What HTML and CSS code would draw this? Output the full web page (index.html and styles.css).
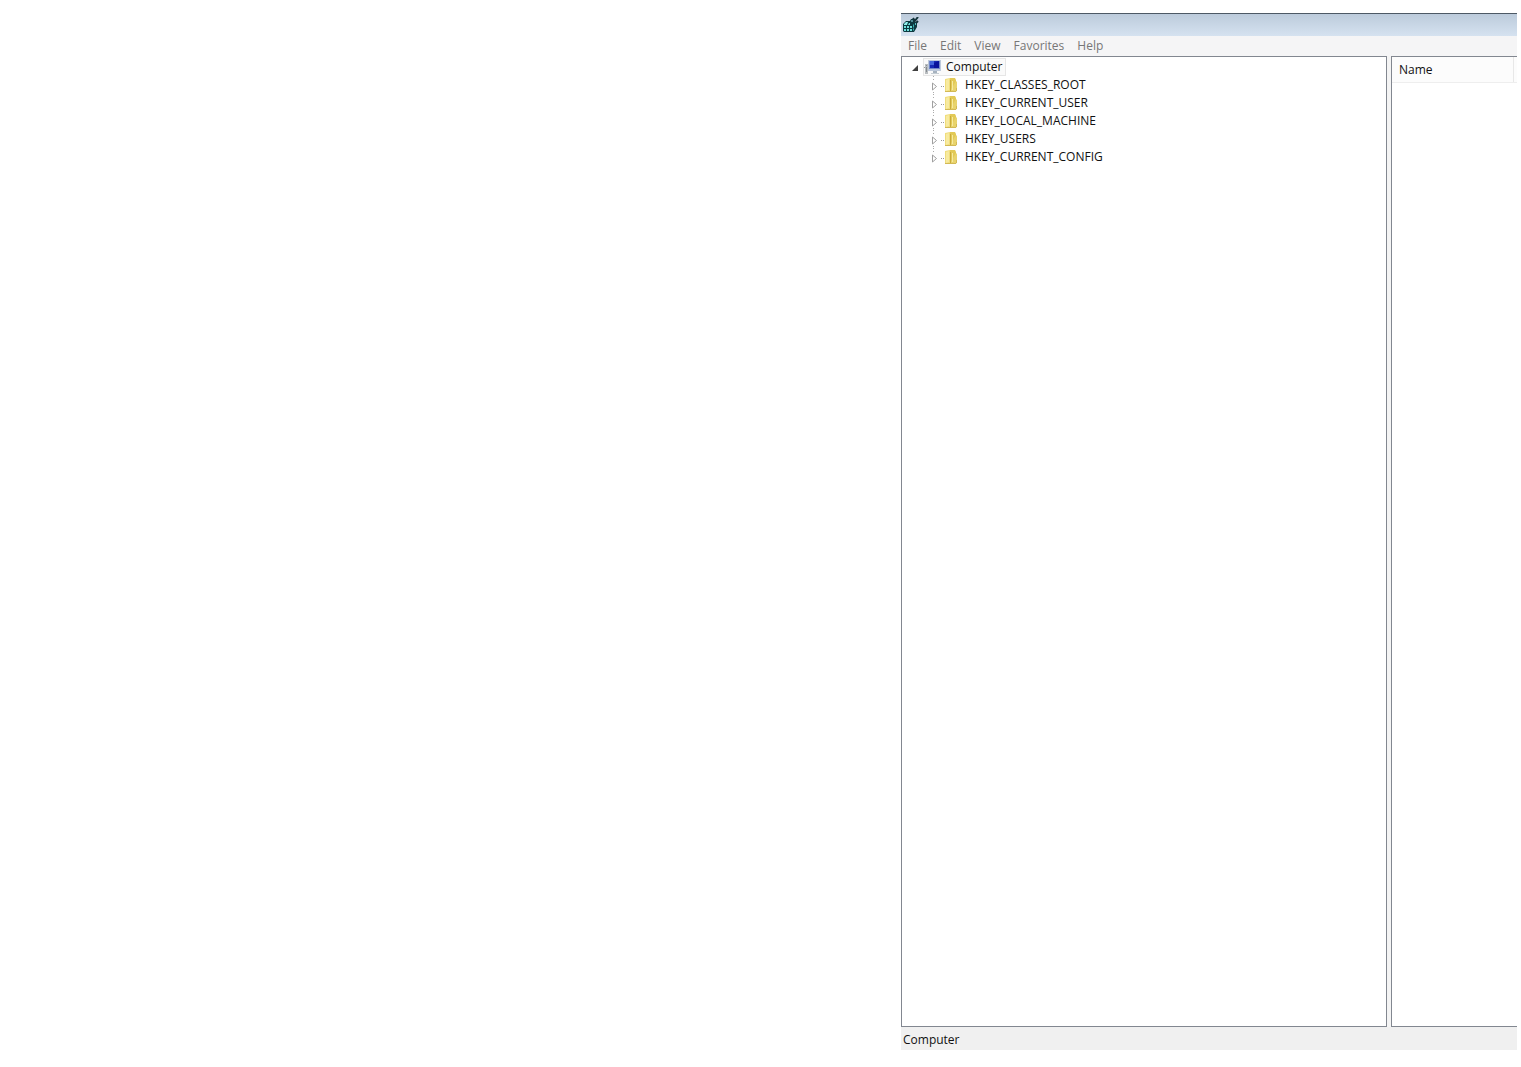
FILE: index.html
```html
<!DOCTYPE html>
<html lang="en">
<head>
    <meta charset="UTF-8">
    <meta name="viewport" content="width=device-width, initial-scale=1.0">
    <title>Registry Editor</title>
    <link rel="stylesheet" href="styles.css">
</head>
<body>

<!-- shared icons -->
<svg class="sprite" aria-hidden="true">
    <symbol id="arrow" viewBox="0 0 7 9">
        <path d="M1.5 1v7L5.5 4.5z" fill="#fff" stroke="#a0a0a0"/>
    </symbol>
    <symbol id="folder" viewBox="0 0 14 16">
        <path d="M1 2l5-1v13l-5 1z" fill="#f0dd7c"/>
        <path d="M6 1h5l1 2v11l-6 1z" fill="#e2c956"/>
        <path d="M12 4l1 1v8l-1 2H7l-1-1z" fill="#e8d36c"/>
        <path d="M2 3l3-1v11l-3 1z" fill="#f7eaa0"/>
        <path d="M6.500 3v12" stroke="#c9ab3b"/>
        <path d="M8.500 4v9" stroke="#f6eba0"/>
        <path d="M1 14.500h11M12.500 11v3" stroke="#d2b956"/>
    </symbol>
</svg>

<main class="window">
    <header class="title-bar">
        <svg class="app-icon" viewBox="0 0 16 16" aria-hidden="true">
            <path d="M0 7l3-3h4l1-2h4v3l2 1v4l-3 5H1l-1-1z" fill="#0d3a40"/>
            <path d="M1 7l2-2h2L4 8H1z" fill="#8ff0ec"/>
            <path d="M5 8l1-2h1v2zM1 9h2v2H1zM4 9h2v2H4zM7 9h2v2H7zM1 12h2v2H1zM4 12h2v2H4zM7 12h2v2H7z" fill="#6edfdc"/>
            <path d="M10 8l1-1v3l-1 1zM10 12l1-1v2l-1 1z" fill="#39aeb0"/>
            <path d="M8 3h2v2H8z" fill="#4f8f98"/>
            <path d="M10 1l2 3M15 0l-4 5M15 4l-3 3" fill="none" stroke="#14333a" stroke-width="2"/>
            <path d="M12 6h1v2h-1z" fill="#54bfc2"/>
        </svg>
    </header>

    <nav class="menu-bar">
        <button type="button">File</button>
        <button type="button">Edit</button>
        <button type="button">View</button>
        <button type="button">Favorites</button>
        <button type="button">Help</button>
    </nav>

    <div class="panes">
        <section class="tree-pane">
            <div class="tree-root">
                <svg class="arrow-open" viewBox="0 0 7 7" aria-hidden="true">
                    <path d="M6 1v6H0z" fill="#404040"/>
                </svg>
                <div class="root-label">
                    <svg class="computer-icon" viewBox="0 0 18 16" aria-hidden="true">
                        <path d="M0 8.500h2" stroke="#999" stroke-dasharray="1 1"/>
                        <path d="M1 5h3v10H1z" fill="#b9bdc0"/>
                        <path d="M2 6h1v1H2zM2 8h1v5H2z" fill="#858b90"/>
                        <path d="M4 1h13v11H4z" fill="#bdc9db"/>
                        <path d="M5 2h11v8H5z" fill="#7187c9"/>
                        <path d="M6 2h9v7H6z" fill="#1529b4"/>
                        <path d="M6 2h4v4H6z" fill="#4265db"/>
                        <path d="M10 4l5-2v7h-5z" fill="#08139b"/>
                        <path d="M9 12h4v2H9z" fill="#a6b2bf"/>
                        <path d="M7 14h8v1H7z" fill="#c5cdd3"/>
                    </svg>
                    <span>Computer</span>
                </div>
            </div>
            <ul class="tree">
                <li>
                    <svg class="arrow"><use href="#arrow"/></svg>
                    <svg class="folder"><use href="#folder"/></svg>
                    <span>HKEY_CLASSES_ROOT</span>
                </li>
                <li>
                    <svg class="arrow"><use href="#arrow"/></svg>
                    <svg class="folder"><use href="#folder"/></svg>
                    <span>HKEY_CURRENT_USER</span>
                </li>
                <li>
                    <svg class="arrow"><use href="#arrow"/></svg>
                    <svg class="folder"><use href="#folder"/></svg>
                    <span>HKEY_LOCAL_MACHINE</span>
                </li>
                <li>
                    <svg class="arrow"><use href="#arrow"/></svg>
                    <svg class="folder"><use href="#folder"/></svg>
                    <span>HKEY_USERS</span>
                </li>
                <li>
                    <svg class="arrow"><use href="#arrow"/></svg>
                    <svg class="folder"><use href="#folder"/></svg>
                    <span>HKEY_CURRENT_CONFIG</span>
                </li>
            </ul>
        </section>

        <section class="value-pane">
            <table>
                <thead>
                    <tr>
                        <th scope="col">Name</th>
                        <td></td>
                    </tr>
                </thead>
            </table>
        </section>
    </div>

    <footer class="status-bar">Computer</footer>
</main>

</body>
</html>
```

FILE: styles.css
```css
* {
    box-sizing: border-box;
}
body {
    display: grid;
    grid-template-columns: 225fr 154fr;
    min-height: 100vh;
    margin: 0;
    padding: 13px 4px 17px 1px;
    background-color: #fff;
    color: #111;
    font-family: "Open Sans", "Noto Sans", sans-serif;
    font-size: 12px;
    line-height: 18px;
}
.sprite {
    position: absolute;
    width: 0;
    height: 0;
}
.window {
    grid-column: 2;
    display: flex;
    flex-direction: column;
    min-width: 0;
}
.title-bar {
    display: flex;
    align-items: center;
    height: 23px;
    padding: 0 2px 1px;
    border-top: 1px solid #4d5965;
    background: linear-gradient(#bccbdb, #d5e2f0);
}
.app-icon {
    width: 16px;
    height: 16px;
}
.menu-bar {
    display: flex;
    gap: 13px;
    height: 20px;
    padding-left: 7px;
    background-color: #f5f5f6;
}
.menu-bar button {
    padding: 0;
    border: 0;
    background: none;
    color: #777;
    font: inherit;
}
.panes {
    display: flex;
    flex: 1;
    gap: 4px;
    background-color: #f4f4f4;
}
.tree-pane {
    flex: 0 1 486px;
    padding-top: 1px;
    border: 1px solid #828790;
    background-color: #fff;
}
.tree-root {
    display: flex;
    align-items: center;
    height: 18px;
    padding-left: 10px;
}
.arrow-open {
    width: 7px;
    height: 7px;
    margin-right: 4px;
}
.root-label {
    display: flex;
    align-items: center;
    gap: 4px;
    height: 18px;
    padding-right: 2px;
    border: 1px solid #e6e6e6;
    background-color: #fafafa;
}
.computer-icon {
    width: 18px;
    height: 16px;
}
.tree {
    margin: 0;
    padding: 0 0 0 29px;
    list-style: none;
}
.tree li {
    display: flex;
    align-items: center;
    height: 18px;
    background: linear-gradient(#aaa, #aaa) 2px 0 / 1px 1px no-repeat,
        linear-gradient(#aaa, #aaa) 2px 3px / 1px 1px no-repeat,
        linear-gradient(#aaa, #aaa) 2px 16px / 1px 1px no-repeat,
        linear-gradient(#999, #999) 10px 10px / 1px 1px no-repeat,
        linear-gradient(#999, #999) 12px 10px / 1px 1px no-repeat;
}
.tree li:last-child {
    background-size: 1px 1px, 1px 1px, 0 0, 1px 1px, 1px 1px;
}
.arrow {
    width: 7px;
    height: 9px;
    margin: 2px 6px 0 0;
}
.folder {
    width: 14px;
    height: 16px;
    margin-right: 7px;
}
.value-pane {
    flex: 1;
    border: 1px solid #828790;
    border-right: 0;
    background-color: #fff;
}
.value-pane table {
    width: 100%;
    border-collapse: collapse;
    background-color: #fcfcfc;
}
.value-pane th {
    height: 25px;
    padding: 2px 7px 0;
    border-right: 1px solid #e8e8e8;
    border-bottom: 1px solid #eee;
    font-weight: normal;
    text-align: left;
}
.value-pane td {
    width: 4px;
    padding: 0;
    border-bottom: 1px solid #eee;
}
.status-bar {
    height: 23px;
    padding: 4px 2px 0;
    background-color: #f0f0f0;
}
```
